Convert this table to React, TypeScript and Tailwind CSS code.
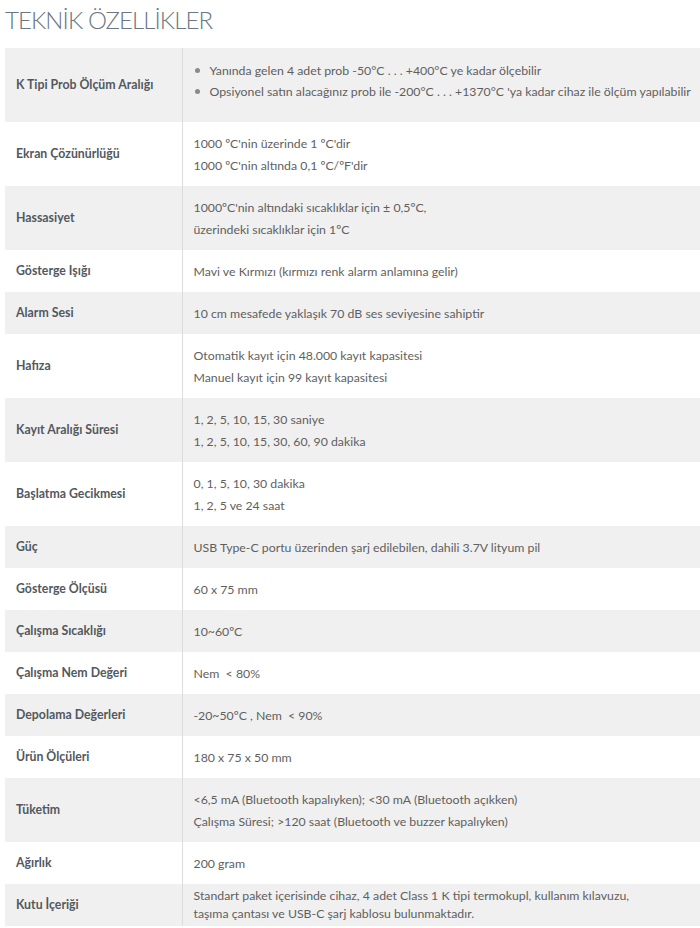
type Spec = { label: string; lines: string[]; bullets?: boolean; wrap?: boolean };

const specs: Spec[] = [
  {
    label: "K Tipi Prob Ölçüm Aralığı",
    bullets: true,
    lines: [
      "Yanında gelen 4 adet prob -50°C . . . +400°C ye kadar ölçebilir",
      "Opsiyonel satın alacağınız prob ile -200°C . . . +1370°C 'ya kadar cihaz ile ölçüm yapılabilir",
    ],
  },
  { label: "Ekran Çözünürlüğü", lines: ["1000 ºC'nin üzerinde 1 ºC'dir", "1000 ºC'nin altında 0,1 ºC/ºF'dir"] },
  { label: "Hassasiyet", lines: ["1000ºC'nin altındaki sıcaklıklar için ± 0,5ºC,", "üzerindeki sıcaklıklar için 1ºC"] },
  { label: "Gösterge Işığı", lines: ["Mavi ve Kırmızı (kırmızı renk alarm anlamına gelir)"] },
  { label: "Alarm Sesi", lines: ["10 cm mesafede yaklaşık 70 dB ses seviyesine sahiptir"] },
  { label: "Hafıza", lines: ["Otomatik kayıt için 48.000 kayıt kapasitesi", "Manuel kayıt için 99 kayıt kapasitesi"] },
  { label: "Kayıt Aralığı Süresi", lines: ["1, 2, 5, 10, 15, 30 saniye", "1, 2, 5, 10, 15, 30, 60, 90 dakika"] },
  { label: "Başlatma Gecikmesi", lines: ["0, 1, 5, 10, 30 dakika", "1, 2, 5 ve 24 saat"] },
  { label: "Güç", lines: ["USB Type-C portu üzerinden şarj edilebilen, dahili 3.7V lityum pil"] },
  { label: "Gösterge Ölçüsü", lines: ["60 x 75 mm"] },
  { label: "Çalışma Sıcaklığı", lines: ["10~60ºC"] },
  { label: "Çalışma Nem Değeri", lines: ["Nem  < 80%"] },
  { label: "Depolama Değerleri", lines: ["-20~50ºC , Nem  < 90%"] },
  { label: "Ürün Ölçüleri", lines: ["180 x 75 x 50 mm"] },
  {
    label: "Tüketim",
    lines: ["<6,5 mA (Bluetooth kapalıyken); <30 mA (Bluetooth açıkken)", "Çalışma Süresi; >120 saat (Bluetooth ve buzzer kapalıyken)"],
  },
  { label: "Ağırlık", lines: ["200 gram"] },
  {
    label: "Kutu İçeriği",
    wrap: true,
    lines: [
      "Standart paket içerisinde cihaz, 4 adet Class 1 K tipi termokupl, kullanım kılavuzu, taşıma çantası ve USB-C şarj kablosu bulunmaktadır.",
    ],
  },
];

function Value({ spec }: { spec: Spec }) {
  if (spec.bullets) {
    return (
      <ul className="pt-[12px] pb-[20px]">
        {spec.lines.map((l) => (
          <li key={l} className="flex items-center leading-[21px] whitespace-nowrap">
            <span className="w-[5px] h-[5px] rounded-full bg-[#8a8a8a] ml-[1px] mr-[10px]" />
            {l}
          </li>
        ))}
      </ul>
    );
  }
  if (spec.wrap) {
    return <p className="py-[3px] leading-[18px] w-[470px]">{spec.lines[0]}</p>;
  }
  return (
    <div className="pt-[11px] pb-[9px]">
      {spec.lines.map((l) => (
        <p key={l} className="leading-[22px] whitespace-pre">
          {l}
        </p>
      ))}
    </div>
  );
}

export default function App() {
  return (
    <div className="min-h-screen bg-white overflow-hidden" style={{ fontFamily: "Lato, sans-serif" }}>
      <h2 className="pl-[5px] pt-[2px] h-[48px] text-[24px] font-light text-[#6b7680] tracking-[-0.9px]">
        TEKNİK ÖZELLİKLER
      </h2>
      <table className="ml-[5px] w-[695px] border-collapse text-[12.3px]">
        <tbody>
          {specs.map((s, i) => (
            <tr key={s.label} className={i % 2 === 0 ? "bg-[#f0f0f0]" : "bg-white"}>
              <td className="w-[177px] pl-[11px] align-middle font-bold text-[#52585e] border-r border-[#dcdcdc]">
                {s.label}
              </td>
              <td className="pl-[11px] align-middle text-[#5f5f5f]">
                <Value spec={s} />
              </td>
            </tr>
          ))}
        </tbody>
      </table>
    </div>
  );
}
